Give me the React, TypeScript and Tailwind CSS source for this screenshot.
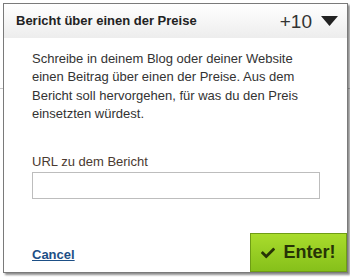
import { FaCheck } from "react-icons/fa";

const App = () => {
  return (
    <div
      className="relative w-[350px] h-[280px] bg-white overflow-hidden"
      style={{ fontFamily: '"Liberation Sans", Arial, sans-serif' }}
    >
      {/* page behind the dialog */}
      <div className="absolute left-0 right-0 top-[88px] h-px bg-[#c8c8c8]" />

      {/* Dialog */}
      <div className="absolute left-[3px] top-[3px] w-[345px] h-[270px] border border-[#7a7a7a] bg-white shadow-[2px_2px_2px_rgba(0,0,0,0.45)] flex flex-col">
        {/* Header */}
        <div className="h-[34px] flex items-center justify-between pl-[12px] pr-[9px] bg-gradient-to-b from-[#ffffff] to-[#ededed]">
          <span className="text-[13px] font-bold text-[#222]">Bericht über einen der Preise</span>
          <div className="flex items-center gap-[9px]">
            <span className="text-[19px] text-[#333] leading-none">+10</span>
            <svg width="17" height="10" viewBox="0 0 17 10">
              <polygon points="0,0 17,0 8.5,10" fill="#222" />
            </svg>
          </div>
        </div>

        {/* Body */}
        <div className="flex-1 flex flex-col pl-[28px] pr-[26px] pt-[12px]">
          <p className="w-[290px] text-[13px] leading-[18.3px] text-[#333]">
            Schreibe in deinem Blog oder deiner Website einen Beitrag über einen der Preise. Aus dem Bericht soll
            hervorgehen, für was du den Preis einsetzten würdest.
          </p>
          <label className="mt-[31px] text-[13px] leading-[15px] text-[#4a3a30]">URL zu dem Bericht</label>
          <input className="mt-[3px] w-[288px] h-[27px] border border-[#bdbdbd] bg-white outline-none" type="text" />
        </div>

        {/* Footer */}
        <div className="h-[39px] flex items-center justify-between pl-[28px]">
          <a href="#" className="text-[13px] font-bold text-[#1d4f86] underline mt-[4px]">
            Cancel
          </a>
          <button className="h-[39px] w-[97px] flex items-center justify-center gap-[8px] border border-[#6f9d15] bg-gradient-to-b from-[#a9dc2c] to-[#86c01a] text-[#273306] text-[18px] font-bold">
            <FaCheck size={14} />
            <span>Enter!</span>
          </button>
        </div>
      </div>
    </div>
  );
};

export default App;
